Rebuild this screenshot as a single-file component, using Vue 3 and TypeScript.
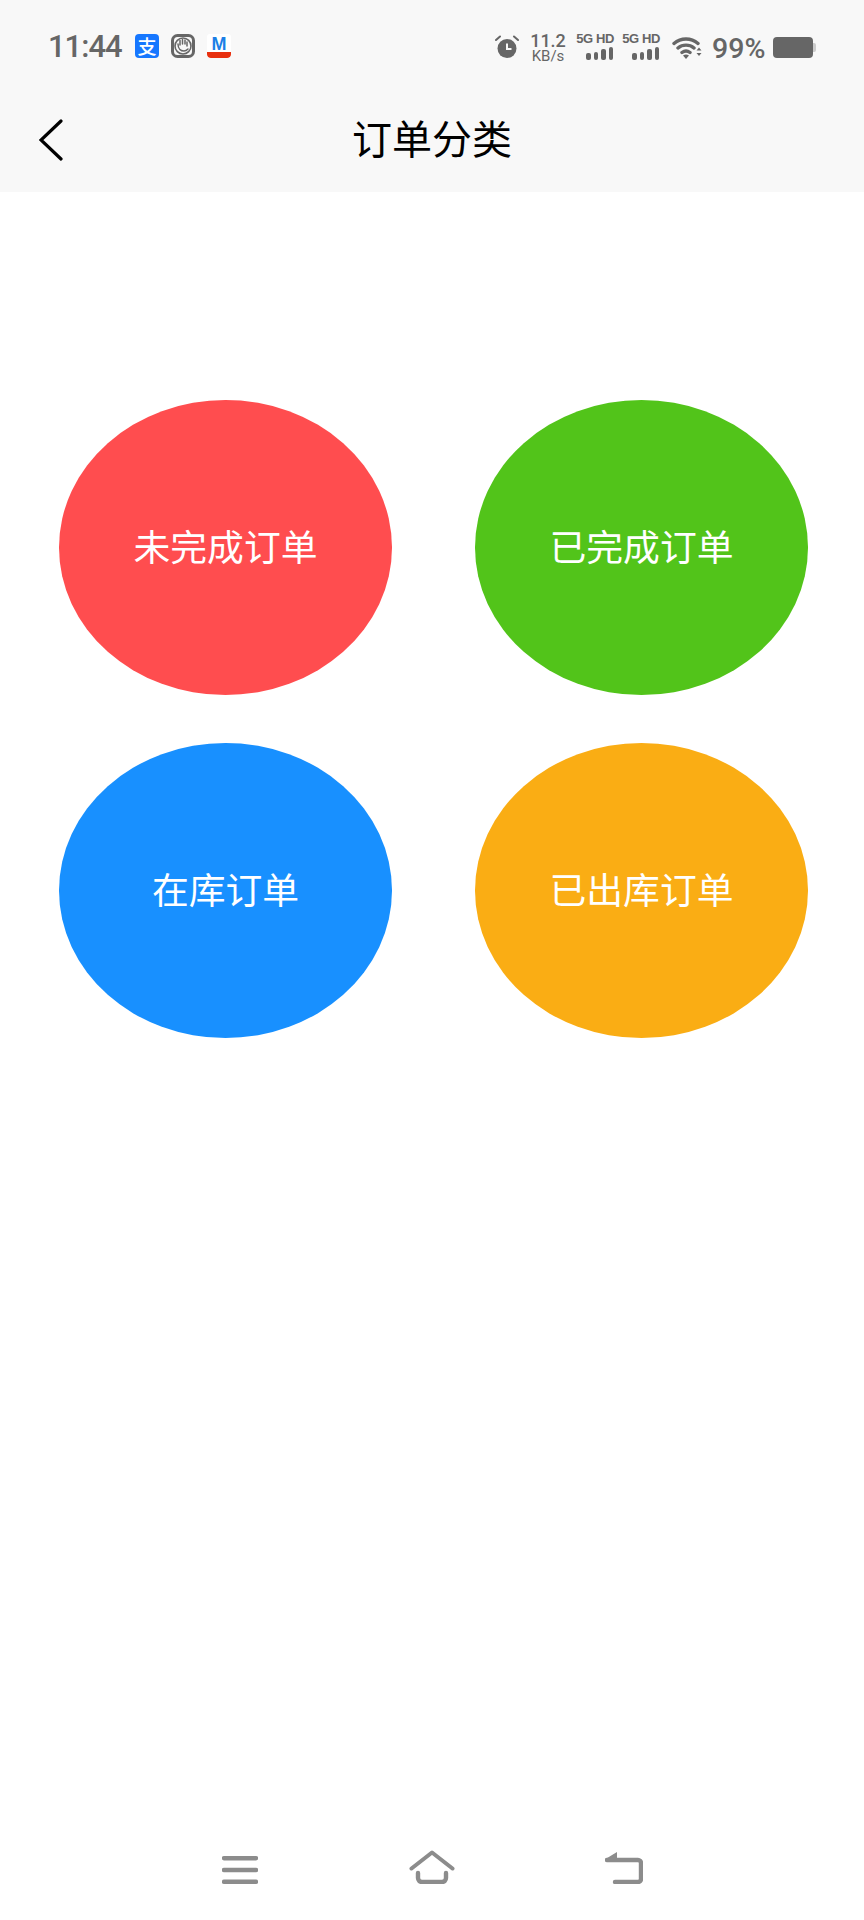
<template>
	<div class="page">
		<header class="top">
			<div class="status">
				<div class="status-left">
					<span class="time">11:44</span>
					<span class="app-icon alipay">支</span>
					<svg class="app-icon" viewBox="0 0 24 24">
						<rect x="1.500" y="1.500" width="21" height="21" rx="5" fill="#f8f8f8" stroke="#666" stroke-width="3" />
						<circle cx="12" cy="12" r="8" fill="none" stroke="#666" stroke-width="1.600" />
						<path d="M7 10c0 5 3 7 6 7 2 0 3-1 4-2M9 11V6.500M11.500 10V5.500M14 10V6M16 12V8" fill="none" stroke="#666" stroke-width="1.500" stroke-linecap="round" />
					</svg>
					<span class="app-icon mall">
						<span class="mall-m">M</span>
						<span class="mall-bar"></span>
					</span>
				</div>
				<div class="status-right">
					<svg class="alarm" viewBox="0 0 24 24">
						<circle cx="12" cy="13.500" r="9.500" fill="#666" />
						<path d="M12 8.500v5.500h4.500" fill="none" stroke="#f8f8f8" stroke-width="2" />
						<path d="M1 5l4-3.500M23 5l-4-3.500" fill="none" stroke="#666" stroke-width="2" stroke-linecap="round" />
					</svg>
					<div class="speed">
						<span class="speed-val">11.2</span>
						<span class="speed-unit">KB/s</span>
					</div>
					<div v-for="n in 2" :key="n" class="sim">
						<span class="sim-label">5G HD</span>
						<div class="sim-bars">
							<i v-for="h in barHeights" :key="h" :style="{ height: h + 'px' }"></i>
						</div>
					</div>
					<svg class="wifi" viewBox="0 0 30 23">
						<path d="M2 7.500c7-6 17-6 24 0M6 12c4.500-3.800 11.500-3.800 16 0M10 16.500c2.500-2 5.500-2 8 0" fill="none" stroke="#666" stroke-width="3.400" stroke-linecap="round" />
						<path d="M11 19.500c2-1.300 4-1.300 6 0L14 23z" fill="#666" />
						<path d="M27 11.500l2.500 3h-5zM27 20l2.500-3h-5z" fill="#666" />
					</svg>
					<span class="battery-pct">99%</span>
					<div class="battery"><span class="battery-nib"></span></div>
				</div>
			</div>
			<div class="nav">
				<svg class="back" viewBox="0 0 24 42">
					<path d="M22 2L2 21l20 19" fill="none" stroke="#000" stroke-width="3.200" stroke-linecap="round" stroke-linejoin="miter" />
				</svg>
				<h1 class="title">订单分类</h1>
			</div>
		</header>

		<main class="grid">
			<div v-for="item in categories" :key="item.label" class="circle" :style="{ background: item.color }">
				{{ item.label }}
			</div>
		</main>

		<footer class="softkeys">
			<svg class="key-menu" viewBox="0 0 36 28">
				<path d="M2 2.200h32M2 14h32M2 25.800h32" fill="none" stroke="#8c8c8c" stroke-width="4.400" stroke-linecap="round" />
			</svg>
			<svg class="key-home" viewBox="0 0 46 34">
				<path d="M2.500 18.500L23 2.500l20.500 16" fill="none" stroke="#8c8c8c" stroke-width="4" stroke-linecap="round" stroke-linejoin="round" />
				<path d="M9 23v5a4 4 0 0 0 4 4h20a4 4 0 0 0 4-4v-5" fill="none" stroke="#8c8c8c" stroke-width="4.400" stroke-linecap="round" />
			</svg>
			<svg class="key-back" viewBox="0 0 38 33">
				<path d="M2 9h31a3 3 0 0 1 3 3v16a3 3 0 0 1-3 3H10" fill="none" stroke="#8c8c8c" stroke-width="4.400" stroke-linecap="round" />
				<path d="M0.500 8L12 1v8z" fill="#8c8c8c" />
			</svg>
		</footer>
	</div>
</template>

<script setup lang="ts">
	const barHeights = [7, 8, 11, 13]

	const categories = [
		{ label: '未完成订单', color: '#ff4d4f' },
		{ label: '已完成订单', color: '#52c41a' },
		{ label: '在库订单', color: '#1890ff' },
		{ label: '已出库订单', color: '#faad14' },
	]
</script>

<style scoped>
	.page {
		display: flex;
		flex-direction: column;
		height: 1920px;
		background: #fff;
		font-family: 'Noto Sans CJK SC', 'Noto Sans', sans-serif;
	}

	.top {
		height: 192px;
		background: #f8f8f8;
	}

	.status {
		display: flex;
		justify-content: space-between;
		align-items: flex-start;
		height: 88px;
		padding: 33px 51px 0 48px;
		box-sizing: border-box;
	}

	.status-left {
		display: flex;
		align-items: center;
		height: 26px;
	}

	.time {
		width: 87px;
		margin-top: 1px;
		font-family: Roboto, sans-serif;
		font-size: 31px;
		font-weight: 500;
		letter-spacing: -1px;
		color: #666;
		line-height: 26px;
	}

	.app-icon {
		display: block;
		width: 24px;
		height: 24px;
		margin-right: 12px;
		flex: none;
	}

	.alipay {
		background: #1677ff;
		border-radius: 4px;
		color: #fff;
		font-size: 19px;
		line-height: 23px;
		text-align: center;
		font-weight: 500;
	}

	.mall {
		display: flex;
		flex-direction: column;
		background: #fff;
		border-radius: 3px;
		overflow: hidden;
	}

	.mall-m {
		height: 18px;
		font-family: 'Liberation Sans', sans-serif;
		font-size: 18px;
		font-weight: 700;
		line-height: 20px;
		text-align: center;
		color: #1b7fe6;
	}

	.mall-bar {
		height: 6px;
		background: #e8300f;
		border-radius: 0 0 4px 4px;
	}

	.status-right {
		display: flex;
		align-items: flex-start;
	}

	.alarm {
		width: 24px;
		height: 24px;
		margin: 2px 12px 0 0;
	}

	.speed {
		display: flex;
		flex-direction: column;
		align-items: center;
		width: 34px;
		margin-right: 10px;
		font-family: Roboto, sans-serif;
		color: #666;
	}

	.speed-val {
		font-size: 18px;
		font-weight: 500;
		line-height: 15px;
	}

	.speed-unit {
		font-size: 15px;
		line-height: 14px;
		margin-top: 1px;
	}

	.sim {
		display: flex;
		flex-direction: column;
		align-items: flex-end;
		width: 39px;
		margin-right: 7px;
	}

	.sim-label {
		font-family: 'Liberation Sans', sans-serif;
		font-size: 13px;
		font-weight: 700;
		letter-spacing: -0.4px;
		line-height: 11px;
		color: #666;
		white-space: nowrap;
	}

	.sim-bars {
		display: flex;
		align-items: flex-end;
		gap: 3px;
		height: 13px;
		margin-top: 3px;
		margin-right: 1px;
	}

	.sim-bars i {
		display: block;
		width: 4.500px;
		background: #666;
		border-radius: 2px;
	}

	.wifi {
		width: 30px;
		height: 23px;
		margin: 3px 10px 0 5px;
	}

	.battery-pct {
		width: 53px;
		font-family: Roboto, sans-serif;
		font-size: 28.500px;
		font-weight: 500;
		line-height: 25px;
		color: #666;
		margin-top: 3px;
		margin-right: 8px;
		white-space: nowrap;
	}

	.battery {
		position: relative;
		width: 40px;
		height: 21px;
		margin-top: 4px;
		background: #666;
		border-radius: 4px;
	}

	.battery-nib {
		position: absolute;
		left: 40px;
		top: 6px;
		width: 3px;
		height: 9px;
		background: #ccc;
		border-radius: 0 2px 2px 0;
	}

	.nav {
		position: relative;
		display: flex;
		justify-content: center;
		align-items: center;
		height: 104px;
	}

	.back {
		position: absolute;
		left: 39px;
		top: 31px;
		width: 24px;
		height: 42px;
	}

	.title {
		margin: 0 0 7px;
		font-size: 40px;
		font-weight: 400;
		color: #000;
		line-height: 56px;
	}

	.grid {
		display: grid;
		grid-template-columns: 333px 333px;
		column-gap: 83px;
		row-gap: 48px;
		padding: 208px 0 0 59px;
	}

	.circle {
		display: flex;
		align-items: center;
		justify-content: center;
		height: 295px;
		padding-bottom: 5px;
		box-sizing: border-box;
		border-radius: 50%;
		color: #fff;
		font-size: 36.800px;
	}

	.softkeys {
		display: flex;
		align-items: flex-end;
		height: 34px;
		margin-top: auto;
		margin-bottom: 36px;
		padding-left: 222px;
	}

	.key-menu {
		width: 36px;
		height: 28px;
		margin-right: 151px;
	}

	.key-home {
		width: 46px;
		height: 34px;
		margin-right: 150px;
	}

	.key-back {
		width: 38px;
		height: 33px;
	}
</style>
